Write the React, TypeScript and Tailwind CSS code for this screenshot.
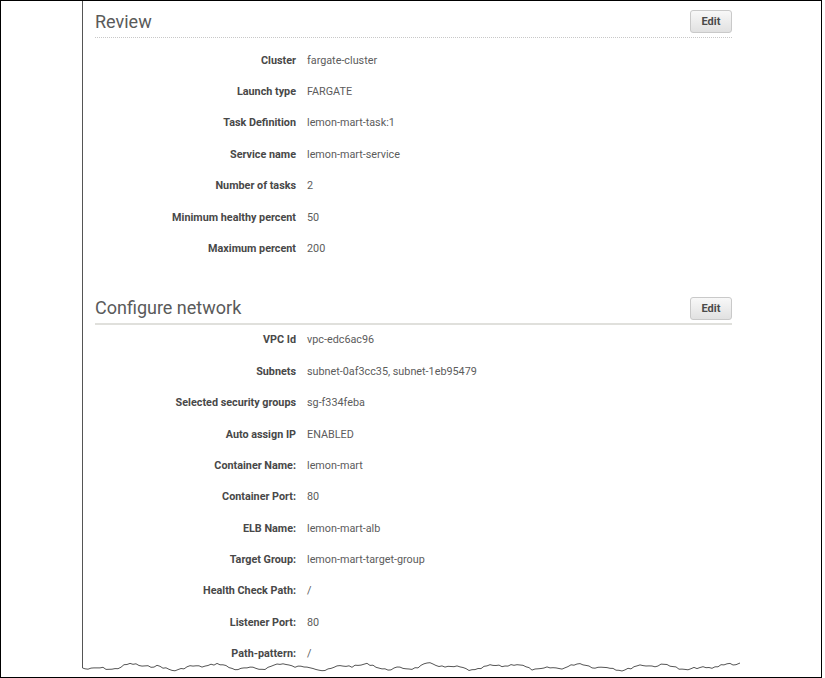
import React from 'react';

const review = [
  ['Cluster', 'fargate-cluster'],
  ['Launch type', 'FARGATE'],
  ['Task Definition', 'lemon-mart-task:1'],
  ['Service name', 'lemon-mart-service'],
  ['Number of tasks', '2'],
  ['Minimum healthy percent', '50'],
  ['Maximum percent', '200'],
];

const network = [
  ['VPC Id', 'vpc-edc6ac96'],
  ['Subnets', 'subnet-0af3cc35, subnet-1eb95479'],
  ['Selected security groups', 'sg-f334feba'],
  ['Auto assign IP', 'ENABLED'],
  ['Container Name:', 'lemon-mart'],
  ['Container Port:', '80'],
  ['ELB Name:', 'lemon-mart-alb'],
  ['Target Group:', 'lemon-mart-target-group'],
  ['Health Check Path:', '/'],
  ['Listener Port:', '80'],
  ['Path-pattern:', '/'],
];

function EditButton() {
  return (
    <button className="w-[42px] h-[23px] rounded-[3px] border border-[#c9c9c9] bg-gradient-to-b from-[#f8f8f8] to-[#e1e1e1] text-[11px] font-bold text-[#4a4a4a] leading-none">
      Edit
    </button>
  );
}

function Row({ label, value }: { label: string; value: string }) {
  return (
    <div className="flex items-center h-[31.4px] text-[10.8px]">
      <div className="w-[201px] shrink-0 text-right font-bold text-[#484848]">{label}</div>
      <div className="pl-[11px] text-[#5c5c5c]">{value}</div>
    </div>
  );
}

// jagged torn-paper line along the bottom of the panel
function tornPoints() {
  let seed = 7;
  const rnd = () => {
    seed = (seed * 9301 + 49297) % 233280;
    return seed / 233280;
  };
  const pts: string[] = ['0.5,0', '0.5,7'];
  for (let x = 3; x <= 655; x += 3) {
    const y = 6 + 2.2 * Math.sin(x * 0.085) + 1.3 * Math.sin(x * 0.21 + 1) + (rnd() - 0.5) * 2;
    pts.push(`${x},${y.toFixed(1)}`);
  }
  pts.push('658,2');
  return pts.join(' ');
}

export default function App() {
  return (
    <div className="w-[822px] h-[678px] border border-black bg-white pl-[81px] font-['Roboto','Liberation_Sans',sans-serif] overflow-hidden">
      <div className="w-[660px] flex flex-col">
        <div className="h-[660px] overflow-hidden border-l border-[#555] pl-[12px] pr-[10px]">
          <section className="pt-[9px]">
            <div className="flex items-center justify-between pb-[4px] border-b border-dotted border-[#c8c8c8]">
              <h2 className="text-[18px] text-[#5a5a5a] leading-none">Review</h2>
              <EditButton />
            </div>
            <div className="pt-[7px]">
              {review.map(([l, v]) => (
                <Row key={l} label={l} value={v} />
              ))}
            </div>
          </section>
          <section className="mt-[32px]">
            <div className="flex items-center justify-between pb-[3px] border-b-2 border-[#e0e0dc]">
              <h2 className="text-[18px] text-[#5a5a5a] leading-none">Configure network</h2>
              <EditButton />
            </div>
            <div>
              {network.map(([l, v]) => (
                <Row key={l} label={l} value={v} />
              ))}
            </div>
          </section>
        </div>
        <svg width="660" height="12" className="block">
          <polyline points={tornPoints()} fill="none" stroke="#555" strokeWidth="1" />
        </svg>
      </div>
    </div>
  );
}
